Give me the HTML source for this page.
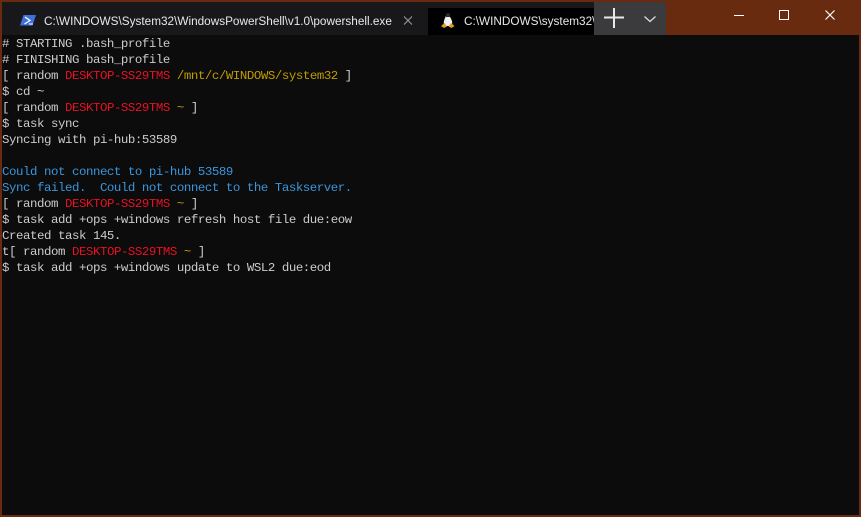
<!DOCTYPE html>
<html>
<head>
<meta charset="utf-8">
<style>
html,body{margin:0;padding:0;background:#682b10;}
body{width:861px;height:517px;position:relative;overflow:hidden;}
.abs{position:absolute;}
#tabbar{left:2px;top:2px;width:592px;height:33px;background:#18181b;}
#tab2{left:428px;top:8px;width:166px;height:27px;background:#000;overflow:hidden;}
#btns{left:594px;top:2px;width:72px;height:33px;background:#3b3b3d;}
#term{left:2px;top:35px;width:857px;height:480px;background:#0c0c0c;}
.tabt{font:11.77px/16px "Liberation Sans",sans-serif;color:#e8e8e8;white-space:nowrap;position:absolute;}
pre{margin:0;position:absolute;left:2px;top:36px;font:12.4px/16px "Liberation Mono",monospace;letter-spacing:-.44px;color:#cccccc;}
.r{color:#e81123}.y{color:#c19c00}.b{color:#3a96dd}
svg{position:absolute;left:0;top:0;}
</style>
</head>
<body>
<div class="abs" id="tabbar"></div>
<div class="abs" id="tab2"></div>
<div class="abs" id="btns"></div>
<div class="abs" id="term"></div>
<div class="tabt" style="left:44px;top:14px;width:348px;">C:\WINDOWS\System32\WindowsPowerShell\v1.0\powershell.exe</div>
<div class="tabt" style="left:464px;top:14px;width:130px;overflow:hidden;">C:\WINDOWS\system32\WINDOWS</div>
<svg width="861" height="517" viewBox="0 0 861 517" fill="none">
  <!-- powershell icon -->
  <path d="M23.500 15H36L32.500 25.500H20Z" fill="#3f70dc"/>
  <path d="M25 17L30 20.500L24.500 24" stroke="#fff" stroke-width="1.300"/>
  <path d="M29 24H33" stroke="#fff" stroke-width="1"/>
  <!-- close x tab1 -->
  <path d="M404 16.500L412 24.500M412 16.500L404 24.500" stroke="#a0a0a2" stroke-width="1"/>
  <!-- linux icon -->
  <path d="M445.500 17C446 14 449.500 14 450 17C452 20 453 23 451.500 26H444.500C443 23 444 20 445.500 17Z" fill="#f0f0f0"/>
  <path d="M446 15C446 12.500 450 12.500 450 15L450 17H446Z" fill="#2c2c2c"/>
  <path d="M441 26L444.500 23L447 26.500L444 28Z" fill="#e0a020"/>
  <path d="M454.500 26L451 23L448.500 26.500L451.500 28Z" fill="#e0a020"/>
  <!-- plus -->
  <path d="M604 17.500H624M614 8V28" stroke="#e8e8e8" stroke-width="2"/>
  <!-- chevron -->
  <path d="M644.500 16.500L650 21.500L655.500 16.500" stroke="#dcdcdc" stroke-width="1.300"/>
  <!-- window buttons -->
  <path d="M734 15.500H744" stroke="#fff" stroke-width="1"/>
  <rect x="779.500" y="10.500" width="9" height="9" stroke="#fff" stroke-width="1"/>
  <path d="M825.500 10.500L834.500 19.500M834.500 10.500L825.500 19.500" stroke="#fff" stroke-width="1.200"/>
</svg>
<pre># STARTING .bash_profile
# FINISHING bash_profile
[ random <span class="r">DESKTOP-SS29TMS</span> <span class="y">/mnt/c/WINDOWS/system32</span> ]
$ cd ~
[ random <span class="r">DESKTOP-SS29TMS</span> <span class="y">~</span> ]
$ task sync
Syncing with pi-hub:53589

<span class="b">Could not connect to pi-hub 53589</span>
<span class="b">Sync failed.  Could not connect to the Taskserver.</span>
[ random <span class="r">DESKTOP-SS29TMS</span> <span class="y">~</span> ]
$ task add +ops +windows refresh host file due:eow
Created task 145.
t[ random <span class="r">DESKTOP-SS29TMS</span> <span class="y">~</span> ]
$ task add +ops +windows update to WSL2 due:eod</pre>
</body>
</html>
